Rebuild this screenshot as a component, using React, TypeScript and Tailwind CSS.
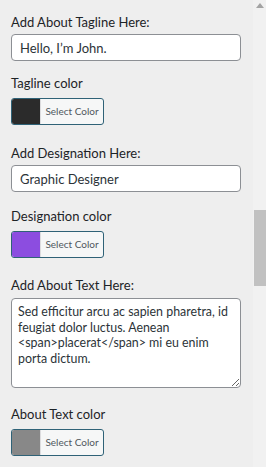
const font = { fontFamily: 'Lato, "Open Sans", sans-serif' };

function Label({ children }: { children: string }) {
  return (
    <div className="text-[13px] leading-[20px] text-[#1d2327]">{children}</div>
  );
}

function ColorButton({ color }: { color: string }) {
  return (
    <button
      type="button"
      className="mt-[5px] flex h-[27px] w-[93px] overflow-hidden rounded-[3px] border border-[#2f6277] bg-[#f6f7f7] p-0"
      style={font}
    >
      <span className="h-full w-[28px] shrink-0" style={{ backgroundColor: color }} />
      <span className="flex h-full flex-1 items-center justify-center border-l border-[#dcdcde] text-[10px] text-[#50575e]">
        Select Color
      </span>
    </button>
  );
}

function TextInput({ value }: { value: string }) {
  return (
    <input
      readOnly
      value={value}
      className="mt-[2px] block h-[27px] w-[230px] rounded-[4px] border border-[#8c8f94] bg-white px-[8px] text-[13px] text-[#2c3338] outline-none"
      style={font}
    />
  );
}

export default function App() {
  return (
    <div className="relative h-[467px] w-[266px] overflow-hidden bg-[#eeeeee]" style={font}>
      <div className="w-[253px] pl-[11px] pt-[12px]">
        <Label>Add About Tagline Here:</Label>
        <TextInput value="Hello, I’m John." />
        <div className="mt-[12px]">
          <Label>Tagline color</Label>
        </div>
        <ColorButton color="#2b2b2b" />

        <div className="mt-[18px]">
          <Label>Add Designation Here:</Label>
        </div>
        <TextInput value="Graphic Designer" />
        <div className="mt-[14px]">
          <Label>Designation color</Label>
        </div>
        <ColorButton color="#8c4de0" />

        <div className="mt-[17px]">
          <Label>Add About Text Here:</Label>
        </div>
        <textarea
          readOnly
          value="Sed efficitur arcu ac sapien pharetra, id feugiat dolor luctus. Aenean <span>placerat</span> mi eu enim porta dictum."
          className="mt-[3px] block h-[90px] w-[230px] resize-y rounded-[4px] border border-[#8c8f94] bg-white px-[6px] py-[5px] text-[12.4px] leading-[15.5px] text-[#2c3338] outline-none"
          style={font}
        />
        <div className="mt-[16px]">
          <Label>About Text color</Label>
        </div>
        <ColorButton color="#888888" />
      </div>

      {/* scrollbar */}
      <div className="absolute right-0 top-0 h-full w-[13px] bg-[#f1f1f1]">
        <div className="mx-auto mt-[3px] h-0 w-0 border-x-[4px] border-b-[5px] border-x-transparent border-b-[#a3a3a3]" />
        <div className="absolute left-[1px] right-0 top-[210px] h-[76px] bg-[#c1c1c1]" />
      </div>
    </div>
  );
}
